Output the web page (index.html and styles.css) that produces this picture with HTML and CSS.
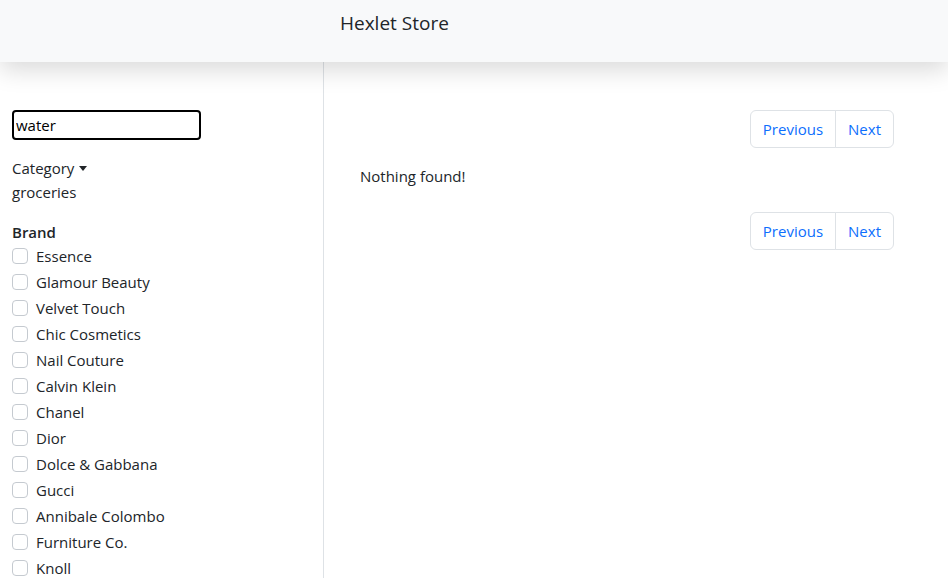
FILE: index.html
```html
<!DOCTYPE html>
<html>
<head>
<meta charset="utf-8">
<link rel="stylesheet" href="styles.css">
</head>
<body>
<header class="navbar"><span class="brand">Hexlet Store</span></header>
<div class="layout">
  <aside class="sidebar">
    <input class="search" type="text" value="water">
    <div class="category">Category <span class="caret"></span></div>
    <div class="cat-value">groceries</div>
    <div class="brand-title">Brand</div>
    <ul class="brands">
      <li><span class="check"></span>Essence</li>
      <li><span class="check"></span>Glamour Beauty</li>
      <li><span class="check"></span>Velvet Touch</li>
      <li><span class="check"></span>Chic Cosmetics</li>
      <li><span class="check"></span>Nail Couture</li>
      <li><span class="check"></span>Calvin Klein</li>
      <li><span class="check"></span>Chanel</li>
      <li><span class="check"></span>Dior</li>
      <li><span class="check"></span>Dolce &amp; Gabbana</li>
      <li><span class="check"></span>Gucci</li>
      <li><span class="check"></span>Annibale Colombo</li>
      <li><span class="check"></span>Furniture Co.</li>
      <li><span class="check"></span>Knoll</li>
    </ul>
  </aside>
  <main class="main">
    <nav class="pager"><a>Previous</a><a>Next</a></nav>
    <p class="empty">Nothing found!</p>
    <nav class="pager"><a>Previous</a><a>Next</a></nav>
  </main>
</div>
</body>
</html>
```
FILE: styles.css
```css
* { box-sizing: border-box; }
html, body { margin: 0; height: 100%; overflow: hidden; }
body {
  font-family: "Open Sans", "Noto Sans", sans-serif;
  font-size: 15px;
  color: #212529;
  background: #fff;
}
.navbar {
  position: relative;
  z-index: 2;
  height: 62px;
  background: #f8f9fa;
  box-shadow: 0 8px 24px rgba(0,0,0,0.15);
  padding-left: 340px;
  padding-top: 10px;
}
.brand { font-size: 19px; color: #212529; }
.layout { display: flex; height: calc(100% - 62px); }
.sidebar {
  width: 324px;
  border-right: 1px solid #dee2e6;
  padding: 48px 12px 0 12px;
}
.search {
  display: block;
  width: 189px;
  height: 30px;
  border: 2px solid #000;
  border-radius: 4px;
  font: 15px "Open Sans", sans-serif;
  padding: 0 2px;
  color: #000;
  margin-bottom: 16px;
}
.category { line-height: 24px; }
.caret {
  display: inline-block;
  width: 0; height: 0;
  border-left: 4px solid transparent;
  border-right: 4px solid transparent;
  border-top: 5px solid #212529;
  vertical-align: 3px;
  margin-left: 1px;
}
.cat-value { line-height: 24px; margin-bottom: 16px; }
.brand-title { font-weight: 600; line-height: 24px; margin-bottom: -1px; }
.brands { list-style: none; margin: 0; padding: 0; }
.brands li { display: flex; align-items: center; height: 26px; }
.check {
  width: 16px; height: 16px;
  border: 1px solid #c5cad0;
  border-radius: 4px;
  margin-right: 8px;
}
.main {
  flex: 1;
  padding: 48px 54px 0 36px;
}
.pager {
  display: flex;
  justify-content: flex-end;
}
.pager a {
  display: block;
  height: 38px;
  line-height: 36px;
  padding: 0 12px;
  color: #0d6efd;
  border: 1px solid #dee2e6;
  font-size: 15px;
}
.pager a:first-child { border-radius: 6px 0 0 6px; }
.pager a:last-child { border-radius: 0 6px 6px 0; margin-left: -1px; }
.empty { margin: 16px 0 24px; line-height: 24px; }
```
